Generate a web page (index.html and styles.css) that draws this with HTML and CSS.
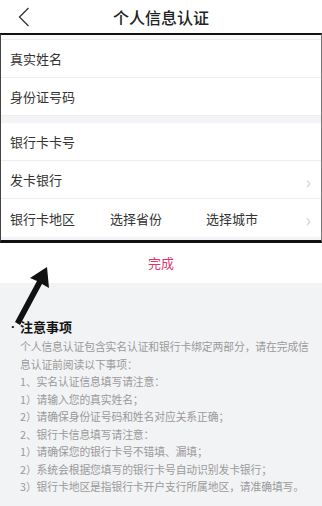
FILE: index.html
```html
<!DOCTYPE html>
<html lang="zh-CN">
<head>
    <meta charset="UTF-8">
    <meta name="viewport" content="width=device-width, initial-scale=1.0">
    <title>个人信息认证</title>
    <link rel="stylesheet" href="styles.css">
</head>
<body>

    <header class="top-bar">
        <span class="back">
            <svg width="12" height="20" viewBox="0 0 12 20"><path d="M10.5 1 L1.5 10 L10.5 19" fill="none" stroke="#333" stroke-width="1.3"/></svg>
        </span>
        <h1 class="title">个人信息认证</h1>
    </header>

    <!-- 表单 -->
    <div class="form-box">
        <div class="gap gap-top"></div>
        <div class="row">真实姓名</div>
        <div class="row">身份证号码</div>
        <div class="gap"></div>
        <div class="row">银行卡卡号</div>
        <div class="row">发卡银行<span class="arrow">›</span></div>
        <div class="row">
            <span class="label">银行卡地区</span>
            <span class="pick">选择省份</span>
            <span class="pick">选择城市</span>
            <span class="arrow">›</span>
        </div>
        <div class="gap gap-bottom"></div>
    </div>

    <div class="done">完成</div>

    <!-- 注意事项 -->
    <div class="notes">
        <div class="notes-title"><span class="dot">·</span><span>注意事项</span></div>
        <p>个人信息认证包含实名认证和银行卡绑定两部分，请在完成信<br>息认证前阅读以下事项：</p>
        <p>1、实名认证信息填写请注意：</p>
        <p>1）请输入您的真实姓名；</p>
        <p>2）请确保身份证号码和姓名对应关系正确；</p>
        <p>2、银行卡信息填写请注意：</p>
        <p>1）请确保您的银行卡号不错填、漏填；</p>
        <p>2）系统会根据您填写的银行卡号自动识别发卡银行；</p>
        <p>3）银行卡地区是指银行卡开户支行所属地区，请准确填写。</p>
    </div>

    <svg class="pointer" width="40" height="62" viewBox="0 0 40 62">
        <path d="M35 2 L37 23 L30 19 L8 60 L3 57 L25 16 L18 13 Z" fill="#111"/>
    </svg>

</body>
</html>
```

FILE: styles.css
```css
body {
    margin: 0;
    width: 322px;
    font-family: "Noto Sans CJK SC", "Noto Sans", sans-serif;
    color: #333;
    background-color: #fff;
    position: relative;
}

.top-bar {
    height: 33px;
    display: flex;
    align-items: center;
    justify-content: center;
    position: relative;
}

.back {
    position: absolute;
    left: 18px;
    top: 7px;
}

.title {
    margin: 0;
    font-size: 16px;
    font-weight: 500;
    color: #222;
}

/* 表单 */
.form-box {
    border-top: 2px solid #111;
    border-left: 1px solid #444;
    border-right: 1px solid #777;
    border-bottom: 3px solid #111;
}

.gap {
    height: 7px;
    background-color: #f4f4f6;
}

.gap-top {
    height: 4px;
    background-color: #fafafa;
    border-bottom: 1px solid #eee;
}

.gap-bottom {
    height: 3px;
}

.row {
    height: 37px;
    display: flex;
    align-items: center;
    padding-left: 9px;
    font-size: 13px;
    border-bottom: 1px solid #eee;
    position: relative;
}

.row:nth-last-child(2) {
    border-bottom: none;
    height: 38px;
}

.label {
    width: 100px;
}

.pick {
    width: 96px;
}

.arrow {
    position: absolute;
    right: 10px;
    top: 7px;
    font-size: 18px;
    color: #d4d4d4;
}

.done {
    height: 40px;
    line-height: 40px;
    text-align: center;
    font-size: 13px;
    color: #e0356c;
}

/* 注意事项 */
.notes {
    background-color: #f2f3f5;
    padding: 34px 20px 10px;
    height: 179px;
}

.notes-title {
    display: flex;
    align-items: center;
    font-size: 13px;
    font-weight: bold;
    color: #111;
    margin-left: -9px;
    margin-bottom: 2px;
}

.dot {
    width: 9px;
    font-family: "Liberation Sans", sans-serif;
}

.notes p {
    margin: 0;
    white-space: nowrap;
    font-size: 10.8px;
    letter-spacing: -0.1px;
    line-height: 17.5px;
    color: #9a9a9a;
}

.pointer {
    position: absolute;
    left: 12px;
    top: 265px;
}
```
